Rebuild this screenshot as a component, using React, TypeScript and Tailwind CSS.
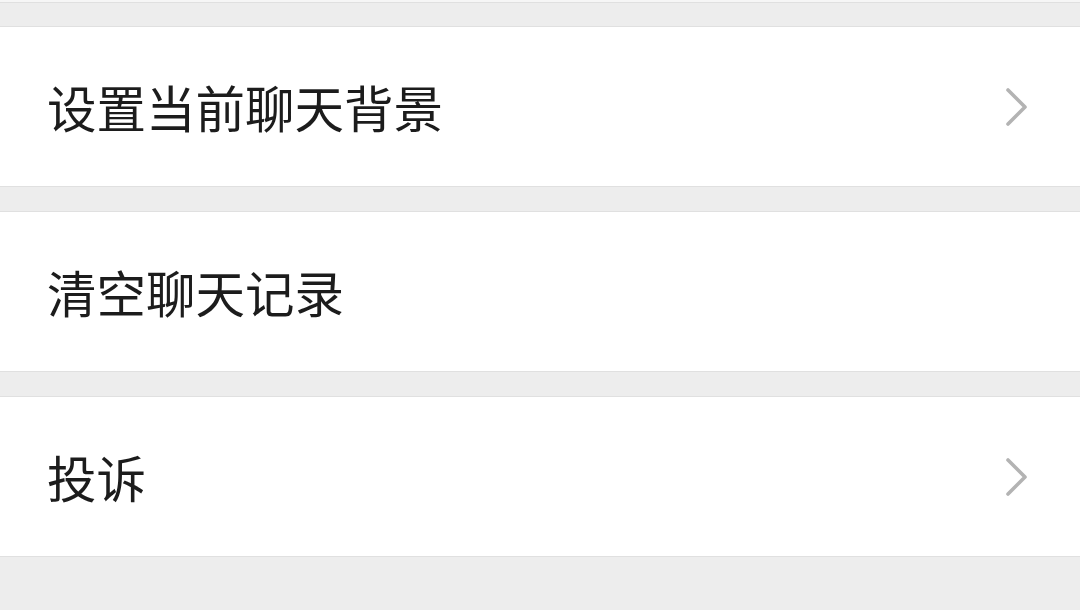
import React from "react";

function Chevron() {
  return (
    <svg width="24" height="40" viewBox="0 0 24 40" className="shrink-0">
      <path d="M4 3 L21 20 L4 37" fill="none" stroke="#b3b3b3" strokeWidth="3.6" strokeLinecap="round" strokeLinejoin="round" />
    </svg>
  );
}

function Row({ label, arrow }: { label: string; arrow?: boolean }) {
  return (
    <div className="h-[161px] shrink-0 bg-white border-y border-[#e0e0e0] flex items-center justify-between pl-[47px] pr-[52px]">
      <span className="text-[49.5px] leading-none text-[#1c1c1c]" style={{ fontFamily: '"Noto Sans CJK SC", "Noto Sans", sans-serif' }}>
        {label}
      </span>
      {arrow && <Chevron />}
    </div>
  );
}

export default function App() {
  return (
    <div className="w-[1080px] h-[610px] overflow-hidden bg-[#ededed] flex flex-col">
      <div className="h-[3px] bg-[#f6f6f6] border-b border-[#e0e0e0] shrink-0" />
      <div className="h-[23px] shrink-0" />
      <Row label="设置当前聊天背景" arrow />
      <div className="h-[24px] shrink-0" />
      <Row label="清空聊天记录" />
      <div className="h-[24px] shrink-0" />
      <Row label="投诉" arrow />
    </div>
  );
}
